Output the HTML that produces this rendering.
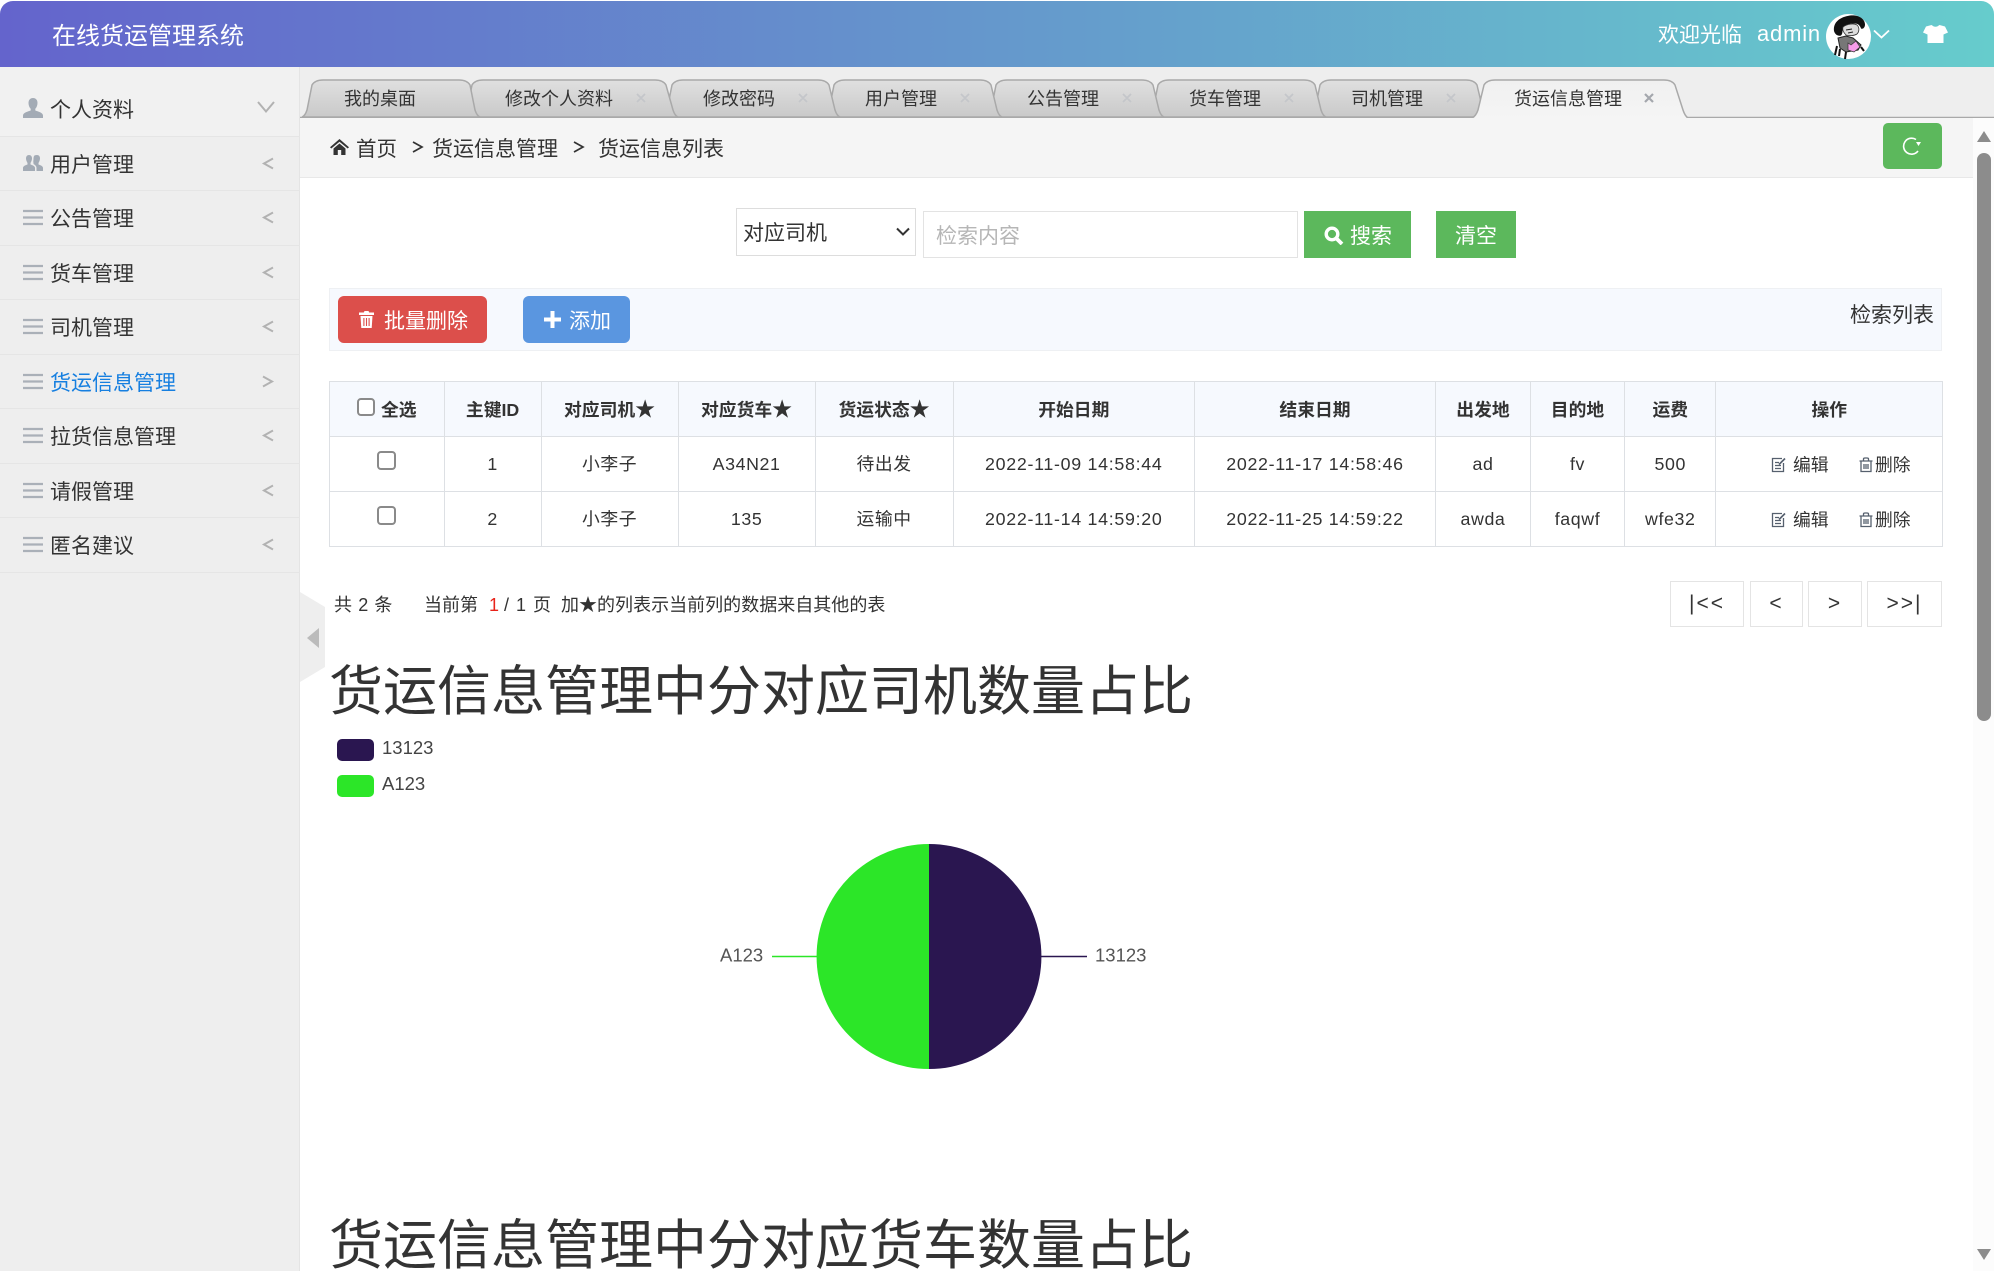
<!DOCTYPE html>
<html lang="zh-CN">
<head>
<meta charset="utf-8">
<title>在线货运管理系统</title>
<style>
html,body{margin:0;padding:0;width:1994px;height:1271px;overflow:hidden;background:#fff;}
body{position:relative;font-family:"Liberation Sans","Noto Sans CJK SC",sans-serif;color:#333;}
.a{position:absolute;}
.t{position:absolute;white-space:nowrap;line-height:30px;height:30px;}
.m{font-size:21px;}
.s{font-size:17.8px;}
.f{font-size:18px;}
#hdr{left:0;top:1px;width:1994px;height:66px;background:linear-gradient(90deg,#6464cc,#66cccc);border-radius:13px 13px 0 0;}
#side{left:0;top:67px;width:300px;height:1204px;box-sizing:border-box;background:#eee;border-right:1px solid #e4e4e4;}
.div{position:absolute;left:0;width:300px;height:1px;background:#e5e5e5;}
#tabbar{left:300px;top:67px;width:1694px;height:51px;background:#eee;}
#crumb{left:300px;top:118px;width:1673px;height:59px;background:#f5f5f5;border-bottom:1px solid #e8e8e8;}
#sb{left:1973px;top:118px;width:21px;height:1153px;background:#fcfcfc;}
#thumb{left:1977px;top:153px;width:13.5px;height:568px;background:#8c8c8c;border-radius:7px;}
.btn{position:absolute;}
#tb{position:absolute;left:329px;top:381px;width:1613px;border-collapse:collapse;table-layout:fixed;font-size:17.8px;color:#333;}
#tb th,#tb td{border:1px solid #dde0e4;padding:0;text-align:center;height:54px;line-height:30px;white-space:nowrap;}
#tb th{background:#f6f9fe;font-weight:bold;height:52px;padding-top:2px;}
#tb th b{font-size:20px;line-height:0;}
#tb td{letter-spacing:.6px;}
.cb{position:absolute;appearance:none;-webkit-appearance:none;margin:0;padding:0;width:19px;height:19px;border:2px solid #8a8a8a;border-radius:4px;background:#fff;box-sizing:border-box;}
.pg{position:absolute;top:581px;height:46px;box-sizing:border-box;border:1px solid #e4e4e4;text-align:center;line-height:44px;font-size:21px;color:#333;letter-spacing:2px;background:#fff;}
h1{position:absolute;margin:0;font-weight:normal;font-size:54px;line-height:70px;height:70px;white-space:nowrap;color:#333;}
</style>
</head>
<body>
<div id="hdr" class="a"></div>
<div class="t" style="left:52px;top:21.500px;font-size:24px;color:#fff;">在线货运管理系统</div>
<div class="t m" style="left:1658px;top:21px;color:#fff;">欢迎光临</div>
<div class="t" style="left:1757px;top:19px;font-size:22px;letter-spacing:.8px;color:#fff;">admin</div>
<svg class="a" style="left:1826px;top:14px" width="46" height="46" viewBox="0 0 46 46">
<circle cx="22.500" cy="22.500" r="22.500" fill="#fff"/>
<path d="M8 17C7 8 14 3 24 1.500c8-1 15 3 15 9 0 3-2 5-4 4-1-3-3-5-6-5-5 0-10 1-12 5-1 3 0 5-2 7-3 1-6-1-7-4.500z" fill="#111"/>
<path d="M17 13c4-3 11-4 14-2 3 3 2 7 0 9-3 2-8 2-11 1-2-2-4-5-3-8z" fill="#dcdcdc" stroke="#333" stroke-width=".8"/>
<path d="M20 16l6-1M22 19l5-1" stroke="#222" stroke-width="1"/>
<path d="M12 24l8-2 7 2 8 7-3 5-12 2-6-4z" fill="#777" stroke="#222" stroke-width="1"/>
<path d="M22 29l3 2 5-4 4 6-6 5-6-2z" fill="#f59ce8" stroke="#333" stroke-width=".7"/>
<path d="M11 32l-2 9M20 38l-1 7M14 35l-1 7M35 33l3 4" stroke="#111" stroke-width="2" fill="none"/>
</svg>
<svg class="a" style="left:1873px;top:29px" width="17" height="10" viewBox="0 0 17 10"><path d="M1 1.500l7.500 7 7.500-7" fill="none" stroke="#fff" stroke-width="1.800"/></svg>
<svg class="a" style="left:1923px;top:25px" width="25" height="18" viewBox="0 0 25 18"><path d="M3 1.500L8.500 0Q12.500 3.500 16.500 0L22 1.500L25 7.500L20.500 9.500V18H4.500V9.500L0 7.500Z" fill="#fff"/></svg>

<div id="side" class="a"></div>
<div class="a" style="left:0;top:67px;width:299px;height:69px;background:#f1f1f1;"></div>
<div class="div" style="top:136px"></div>
<div class="div" style="top:190px"></div>
<div class="div" style="top:245px"></div>
<div class="div" style="top:299px"></div>
<div class="div" style="top:354px"></div>
<div class="div" style="top:408px"></div>
<div class="div" style="top:463px"></div>
<div class="div" style="top:517px"></div>
<div class="div" style="top:572px"></div>

<svg class="a" style="left:23px;top:98px" width="20" height="20" viewBox="0 0 20 20"><path d="M10 0c3 0 4.500 2.200 4.500 5 0 2.500-1 4.500-2.200 5.800V12.500c2.500 1 7.700 2 7.700 5V20H0v-2.500c0-3 5.200-4 7.700-5V10.800C6.500 9.500 5.500 7.500 5.500 5 5.500 2.200 7 0 10 0z" fill="#a3abb5"/></svg>
<svg class="a" style="left:23px;top:155px" width="20" height="16" viewBox="0 0 20 16"><path d="M6 0c2 0 3 1.500 3 3.500S8 7 7.500 8v1.500c2 .8 4.500 1.500 4.500 3.500v3H0v-3c0-2 2.500-2.700 4.500-3.500V8C4 7 3 5.500 3 3.500S4 0 6 0zM14 0c2 0 3 1.500 3 3.500S16 7 15.500 8v1.500c2 .8 4.500 1.500 4.500 3.500v3h-6.500v-3c0-2-1.500-3-3-4V8C10 7 10.500 5.500 10.500 3.500 10.500 2 11 .5 12 .3 12.600.1 13.300 0 14 0z" fill="#a3abb5"/></svg>
<svg class="a" style="left:23px;top:209px" width="20" height="17" viewBox="0 0 20 17"><path d="M0 2h20M0 8.500h20M0 15h20" stroke="#aab0b8" stroke-width="2.200"/></svg>
<svg class="a" style="left:23px;top:264px" width="20" height="17" viewBox="0 0 20 17"><path d="M0 2h20M0 8.500h20M0 15h20" stroke="#aab0b8" stroke-width="2.200"/></svg>
<svg class="a" style="left:23px;top:318px" width="20" height="17" viewBox="0 0 20 17"><path d="M0 2h20M0 8.500h20M0 15h20" stroke="#aab0b8" stroke-width="2.200"/></svg>
<svg class="a" style="left:23px;top:373px" width="20" height="17" viewBox="0 0 20 17"><path d="M0 2h20M0 8.500h20M0 15h20" stroke="#aab0b8" stroke-width="2.200"/></svg>
<svg class="a" style="left:23px;top:427px" width="20" height="17" viewBox="0 0 20 17"><path d="M0 2h20M0 8.500h20M0 15h20" stroke="#aab0b8" stroke-width="2.200"/></svg>
<svg class="a" style="left:23px;top:482px" width="20" height="17" viewBox="0 0 20 17"><path d="M0 2h20M0 8.500h20M0 15h20" stroke="#aab0b8" stroke-width="2.200"/></svg>
<svg class="a" style="left:23px;top:536px" width="20" height="17" viewBox="0 0 20 17"><path d="M0 2h20M0 8.500h20M0 15h20" stroke="#aab0b8" stroke-width="2.200"/></svg>

<div class="t m" style="left:50px;top:95.500px">个人资料</div>
<div class="t m" style="left:50px;top:150.500px">用户管理</div>
<div class="t m" style="left:50px;top:204.500px">公告管理</div>
<div class="t m" style="left:50px;top:259.500px">货车管理</div>
<div class="t m" style="left:50px;top:313.500px">司机管理</div>
<div class="t m" style="left:50px;top:368.500px;color:#167fe0">货运信息管理</div>
<div class="t m" style="left:50px;top:422.500px">拉货信息管理</div>
<div class="t m" style="left:50px;top:477.500px">请假管理</div>
<div class="t m" style="left:50px;top:531.500px">匿名建议</div>

<svg class="a" style="left:0;top:90px" width="300" height="470" viewBox="0 90 300 470" fill="none" stroke="#b2b2b2" stroke-width="2">
<path d="M258 102l8 9.500 8-9.500"/>
<path d="M273 158.500l-9 5 9 5M273 212.500l-9 5 9 5M273 267.500l-9 5 9 5M273 321.500l-9 5 9 5"/>
<path d="M263 376.500l9 5-9 5"/>
<path d="M273 430.500l-9 5 9 5M273 485.500l-9 5 9 5M273 539.500l-9 5 9 5"/>
</svg>

<div id="tabbar" class="a"></div>
<svg class="a" style="left:300px;top:67px" width="1694" height="52" viewBox="300 67 1694 52">
<defs>
<linearGradient id="g" x1="0" y1="0" x2="0" y2="1"><stop offset="0" stop-color="#e0e0e0"/><stop offset="1" stop-color="#c9c9c9"/></linearGradient>
<linearGradient id="h" x1="0" y1="0" x2="0" y2="1"><stop offset="0" stop-color="#f0f0f0"/><stop offset="1" stop-color="#f5f5f5"/></linearGradient>
</defs>
<g fill="url(#g)" stroke="#a9a9a9" stroke-width="1.500">
<path d="M1310 117Q1313 116 1315 110L1320 85Q1323 80 1331 80H1466Q1474 80 1477 85L1483 110Q1485 116 1488 117Z"/>
<path d="M1148 117Q1151 116 1153 110L1158 85Q1161 80 1169 80H1304Q1312 80 1315 85L1321 110Q1323 116 1326 117Z"/>
<path d="M986 117Q989 116 991 110L996 85Q999 80 1007 80H1142Q1150 80 1153 85L1159 110Q1161 116 1164 117Z"/>
<path d="M824 117Q827 116 829 110L834 85Q837 80 845 80H980Q988 80 991 85L997 110Q999 116 1002 117Z"/>
<path d="M662 117Q665 116 667 110L672 85Q675 80 683 80H818Q826 80 829 85L835 110Q837 116 840 117Z"/>
<path d="M462 117Q465 116 467 110L472 85Q475 80 483 80H655Q663 80 666 85L673 110Q675 116 678 117Z"/>
<path d="M302 117Q305 116 307 110L312 85Q315 80 323 80H459Q467 80 470 85L475 110Q477 116 480 117Z"/>
</g>
<path d="M300 117.500H1994" stroke="#a9a9a9" stroke-width="1.500" fill="none"/>
<path d="M1472 118.500Q1476 116 1478 110L1484 85Q1487 80 1495 80H1664Q1672 80 1675 85L1683 110Q1685 116 1688 118.500Z" fill="url(#h)"/>
<path d="M1472 118Q1476 116 1478 110L1484 85Q1487 80 1495 80H1664Q1672 80 1675 85L1683 110Q1685 116 1688 118" fill="none" stroke="#a9a9a9" stroke-width="1.500"/>
</svg>
<div class="t f" style="left:344px;top:84px">我的桌面</div>
<div class="t f" style="left:505px;top:84px">修改个人资料</div>
<div class="t f" style="left:703px;top:84px">修改密码</div>
<div class="t f" style="left:865px;top:84px">用户管理</div>
<div class="t f" style="left:1027px;top:84px">公告管理</div>
<div class="t f" style="left:1189px;top:84px">货车管理</div>
<div class="t f" style="left:1351px;top:84px">司机管理</div>
<div class="t f" style="left:1514px;top:84px">货运信息管理</div>
<svg class="a" style="left:630px;top:90px" width="1040" height="16" viewBox="630 90 1040 16" fill="none" stroke="#c4c6ca" stroke-width="1.800">
<path d="M637 94l8 8M645 94l-8 8M799 94l8 8M807 94l-8 8M961 94l8 8M969 94l-8 8M1123 94l8 8M1131 94l-8 8M1285 94l8 8M1293 94l-8 8M1447 94l8 8M1455 94l-8 8"/>
<path d="M1645 94l8 8M1653 94l-8 8" stroke="#a4a7ad" stroke-width="2.200"/>
</svg>

<div id="crumb" class="a"></div>
<svg class="a" style="left:330px;top:139px" width="19" height="16" viewBox="0 0 19 16"><path d="M9.500 0L19 8.200l-1.300 1.300L9.500 2.800 1.300 9.500 0 8.200zM3.500 9.500L9.500 4.500l6 5V16H11.200V11H7.800V16H3.500z" fill="#333"/></svg>
<div class="t" style="left:356px;top:134.500px;font-size:20.500px">首页</div>
<svg class="a" style="left:412px;top:141px" width="174" height="13" viewBox="412 141 174 13" fill="none" stroke="#333" stroke-width="1.700"><path d="M413 142l9 5-9 5M574 142l9 5-9 5"/></svg>
<div class="t m" style="left:432px;top:134.500px">货运信息管理</div>
<div class="t m" style="left:598px;top:134.500px">货运信息列表</div>
<div class="btn" style="left:1883px;top:123px;width:59px;height:46px;background:#5cb85c;border-radius:5px;"></div>
<svg class="a" style="left:1902px;top:136px" width="21" height="20" viewBox="0 0 21 20" fill="none"><path d="M14 3.500A8 8 0 1 0 16 15" stroke="#fff" stroke-width="1.600"/><path d="M14 6l5 0-2.500 4z" fill="#fff"/></svg>

<div id="sb" class="a"></div>
<svg class="a" style="left:1977px;top:131px" width="14" height="11" viewBox="0 0 14 11"><path d="M7 0l7 11H0z" fill="#8c8c8c"/></svg>
<div id="thumb" class="a"></div>
<svg class="a" style="left:1977px;top:1249px" width="14" height="11" viewBox="0 0 14 11"><path d="M0 0h14L7 11z" fill="#8c8c8c"/></svg>

<div class="a" style="left:736px;top:208px;width:180px;height:48px;box-sizing:border-box;border:1px solid #ddd;background:#fff;"></div>
<div class="t m" style="left:743px;top:219px">对应司机</div>
<svg class="a" style="left:896px;top:227px" width="14" height="10" viewBox="0 0 14 10"><path d="M1 1.500l6 6 6-6" fill="none" stroke="#333" stroke-width="2"/></svg>
<div class="a" style="left:923px;top:211px;width:375px;height:47px;box-sizing:border-box;border:1px solid #e3e3e3;background:#fff;"></div>
<div class="t m" style="left:936px;top:222px;color:#b6b6b6">检索内容</div>
<div class="btn" style="left:1304px;top:211px;width:107px;height:47px;background:#5cb85c;"></div>
<svg class="a" style="left:1324px;top:226px" width="20" height="19" viewBox="0 0 20 19"><circle cx="8" cy="8" r="5.800" fill="none" stroke="#fff" stroke-width="3.400"/><path d="M12 12l6 6" stroke="#fff" stroke-width="3.800"/></svg>
<div class="t m" style="left:1350px;top:221.500px;color:#fff">搜索</div>
<div class="btn" style="left:1436px;top:211px;width:80px;height:47px;background:#5cb85c;"></div>
<div class="t m" style="left:1455px;top:221.500px;color:#fff">清空</div>

<div class="a" style="left:329px;top:288px;width:1613px;height:63px;box-sizing:border-box;background:#f6f9fe;border:1px solid #eef0f3;"></div>
<div class="btn" style="left:338px;top:296px;width:149px;height:47px;background:#dc4f4b;border-radius:6px;"></div>
<svg class="a" style="left:359px;top:311px" width="15" height="17" viewBox="0 0 15 17"><path d="M5.500 0h4l.7 1.500H15V4H0V1.500h4.800zM1.500 5h12l-.8 12H2.300z" fill="#fff"/><path d="M4.900 7v8M7.500 7v8M10.100 7v8" stroke="#dc4f4b" stroke-width="1.100"/></svg>
<div class="t m" style="left:384px;top:306.500px;color:#fff">批量删除</div>
<div class="btn" style="left:523px;top:296px;width:107px;height:47px;background:#5a96e0;border-radius:6px;"></div>
<svg class="a" style="left:544px;top:311px" width="17" height="17" viewBox="0 0 17 17"><path d="M6.500 0h4v6.500H17v4h-6.500V17h-4v-6.500H0v-4h6.500z" fill="#fff"/></svg>
<div class="t m" style="left:569px;top:306.500px;color:#fff">添加</div>
<div class="t m" style="left:1850px;top:300.500px">检索列表</div>

<table id="tb">
<colgroup><col style="width:114.600px"><col style="width:97px"><col style="width:137px"><col style="width:137px"><col style="width:138px"><col style="width:241.400px"><col style="width:241px"><col style="width:95px"><col style="width:94px"><col style="width:91.500px"><col style="width:226.500px"></colgroup>
<tr><th></th><th>主键ID</th><th>对应司机<b>★</b></th><th>对应货车<b>★</b></th><th>货运状态<b>★</b></th><th>开始日期</th><th>结束日期</th><th>出发地</th><th>目的地</th><th>运费</th><th>操作</th></tr>
<tr><td></td><td>1</td><td>小李子</td><td>A34N21</td><td>待出发</td><td style="letter-spacing:.72px">2022-11-09 14:58:44</td><td style="letter-spacing:.72px">2022-11-17 14:58:46</td><td>ad</td><td>fv</td><td>500</td><td></td></tr>
<tr><td></td><td>2</td><td>小李子</td><td>135</td><td>运输中</td><td style="letter-spacing:.72px">2022-11-14 14:59:20</td><td style="letter-spacing:.72px">2022-11-25 14:59:22</td><td>awda</td><td>faqwf</td><td>wfe32</td><td></td></tr>
</table>
<input type="checkbox" class="cb" style="left:357px;top:398px;width:18px;height:18px">
<div class="t s" style="left:381px;top:395px;font-weight:bold">全选</div>
<input type="checkbox" class="cb" style="left:377px;top:451px">
<input type="checkbox" class="cb" style="left:377px;top:506px">

<svg class="a" style="left:1771px;top:457px" width="16" height="16" viewBox="0 0 16 16" fill="none" stroke="#56606e" stroke-width="1.300"><path d="M11 1.500H1.500v13h11V6M4 5.500h4M4 8.500h6M4 11.500h6"/><path d="M8 7.500l6-6" stroke-width="1.700"/></svg>
<div class="t s" style="left:1793px;top:450px">编辑</div>
<svg class="a" style="left:1859px;top:457px" width="14" height="16" viewBox="0 0 14 16" fill="none" stroke="#56606e" stroke-width="1.300"><path d="M.5 4h13M4.500 4V2Q4.500 1 6 1h2Q9.500 1 9.500 2V4M2 4v10.500h10V4M5 7v5M7 7v5M9 7v5"/></svg>
<div class="t s" style="left:1875px;top:450px">删除</div>
<svg class="a" style="left:1771px;top:512px" width="16" height="16" viewBox="0 0 16 16" fill="none" stroke="#56606e" stroke-width="1.300"><path d="M11 1.500H1.500v13h11V6M4 5.500h4M4 8.500h6M4 11.500h6"/><path d="M8 7.500l6-6" stroke-width="1.700"/></svg>
<div class="t s" style="left:1793px;top:505px">编辑</div>
<svg class="a" style="left:1859px;top:512px" width="14" height="16" viewBox="0 0 14 16" fill="none" stroke="#56606e" stroke-width="1.300"><path d="M.5 4h13M4.500 4V2Q4.500 1 6 1h2Q9.500 1 9.500 2V4M2 4v10.500h10V4M5 7v5M7 7v5M9 7v5"/></svg>
<div class="t s" style="left:1875px;top:505px">删除</div>

<div class="t f" style="left:334px;top:590px;word-spacing:1.200px">共 2 条</div>
<div class="t f" style="left:424px;top:590px">当前第</div>
<div class="t f" style="left:489px;top:590px;color:#e8231a">1</div>
<div class="t f" style="left:504px;top:590px;word-spacing:2px">/ 1 页</div>
<div class="t f" style="left:561px;top:590px;letter-spacing:.02px">加★的列表示当前列的数据来自其他的表</div>

<div class="pg" style="left:1670px;width:74px">|&lt;&lt;</div>
<div class="pg" style="left:1750px;width:53px">&lt;</div>
<div class="pg" style="left:1808px;width:54px">&gt;</div>
<div class="pg" style="left:1867px;width:75px">&gt;&gt;|</div>

<svg class="a" style="left:300px;top:592px" width="26" height="90" viewBox="0 0 26 90"><path d="M0 0L25 15V75L0 90z" fill="#eee"/><path d="M7 46L19 36V56z" fill="#bbb"/></svg>

<h1 style="left:329px;top:656.500px">货运信息管理中分对应司机数量占比</h1>
<div class="a" style="left:336.500px;top:739px;width:37.500px;height:22px;background:#2a1650;border-radius:5px;"></div>
<div class="t" style="left:382px;top:733px;font-size:18.500px;color:#444">13123</div>
<div class="a" style="left:336.500px;top:775px;width:37.500px;height:22px;background:#2ce628;border-radius:5px;"></div>
<div class="t" style="left:382px;top:769px;font-size:18.500px;color:#444">A123</div>

<svg class="a" style="left:700px;top:820px" width="480" height="280" viewBox="700 820 480 280">
<path d="M929 844A112.500 112.500 0 0 0 929 1069Z" fill="#2ce628"/>
<path d="M929 844A112.500 112.500 0 0 1 929 1069Z" fill="#2a1650"/>
<path d="M772 956.500H817" stroke="#2ce628" stroke-width="1.500"/>
<path d="M1041 956.500H1087" stroke="#2a1650" stroke-width="1.500"/>
<text x="720" y="961.500" font-size="18.500" fill="#555" font-family="Liberation Sans, sans-serif">A123</text>
<text x="1095" y="961.500" font-size="18.500" fill="#555" font-family="Liberation Sans, sans-serif">13123</text>
</svg>

<h1 style="left:329px;top:1211px">货运信息管理中分对应货车数量占比</h1>
</body>
</html>
